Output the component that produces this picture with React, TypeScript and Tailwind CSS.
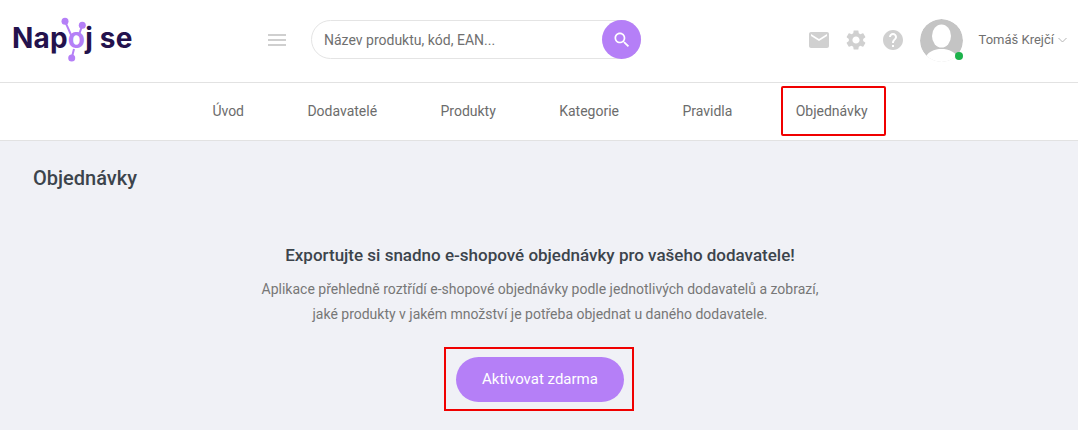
import React from "react";

const P = "#b57ff7";

function Logo() {
  return (
    <div className="relative self-start mt-[15px] ml-[-1px] w-[126px] h-[50px] shrink-0 font-['Inter',sans-serif] font-bold text-[28px] leading-[50px] tracking-[0.2px] text-[#24124d] whitespace-nowrap">
      <span className="relative top-[-2px]">
        Nap<span className="text-[#b57ff7]">o</span>j se
      </span>
      <svg className="absolute left-[1px] top-0" width="125" height="50" viewBox="0 0 125 50">
        <g stroke={P} strokeWidth="2" fill="none">
          <path d="M52 6.300 L59 22" />
          <path d="M69.300 10.300 L65.500 21" />
          <path d="M58.700 43 L61 34" />
        </g>
        <circle cx="52" cy="6.300" r="3.500" fill={P} />
        <circle cx="69.300" cy="10.300" r="3.500" fill={P} />
        <circle cx="58.700" cy="43" r="3.500" fill={P} />
      </svg>
    </div>
  );
}

function Ic({ d, size = 24, color = "#d0d0d0" }: { d: string; size?: number; color?: string }) {
  return (
    <svg width={size} height={size} viewBox="0 0 24 24" fill={color}>
      <path d={d} />
    </svg>
  );
}

const MAIL = "M20 4H4c-1.1 0-1.99.9-1.99 2L2 18c0 1.1.9 2 2 2h16c1.1 0 2-.9 2-2V6c0-1.1-.9-2-2-2zm0 4l-8 5-8-5V6l8 5 8-5v2z";
const GEAR = "M19.14 12.94c.04-.3.06-.61.06-.94 0-.32-.02-.64-.07-.94l2.03-1.58c.18-.14.23-.41.12-.61l-1.92-3.32c-.12-.22-.37-.29-.59-.22l-2.39.96c-.5-.38-1.03-.7-1.62-.94l-.36-2.54c-.04-.24-.24-.41-.48-.41h-3.84c-.24 0-.43.17-.47.41l-.36 2.54c-.59.24-1.13.57-1.62.94l-2.39-.96c-.22-.08-.47 0-.59.22L2.74 8.87c-.12.21-.08.47.12.61l2.03 1.58c-.05.3-.09.63-.09.94s.02.64.07.94l-2.03 1.58c-.18.14-.23.41-.12.61l1.92 3.32c.12.22.37.29.59.22l2.39-.96c.5.38 1.03.7 1.62.94l.36 2.54c.05.24.24.41.48.41h3.84c.24 0 .44-.17.47-.41l.36-2.54c.59-.24 1.13-.56 1.62-.94l2.39.96c.22.08.47 0 .59-.22l1.92-3.32c.12-.22.07-.47-.12-.61l-2.01-1.58zM12 15.6c-1.98 0-3.6-1.62-3.6-3.6s1.62-3.6 3.6-3.6 3.6 1.62 3.6 3.6-1.62 3.6-3.6 3.6z";
const HELP = "M12 2C6.48 2 2 6.48 2 12s4.48 10 10 10 10-4.48 10-10S17.52 2 12 2zm1 17h-2v-2h2v2zm2.07-7.75l-.9.92C13.45 12.9 13 13.5 13 15h-2v-.5c0-1.1.45-2.1 1.17-2.83l1.24-1.26c.37-.36.59-.86.59-1.41 0-1.1-.9-2-2-2s-2 .9-2 2H8c0-2.21 1.79-4 4-4s4 1.79 4 4c0 .88-.36 1.68-.93 2.25z";
const SEARCH = "M15.5 14h-.79l-.28-.27C15.41 12.59 16 11.11 16 9.5 16 5.91 13.09 3 9.5 3S3 5.91 3 9.5 5.91 16 9.5 16c1.61 0 3.09-.59 4.23-1.57l.27.28v.79l5 4.99L20.49 19l-4.99-5zm-6 0C7.01 14 5 11.99 5 9.5S7.01 5 9.5 5 14 7.01 14 9.5 11.99 14 9.5 14z";

function Avatar() {
  return (
    <div className="relative w-[43px] h-[43px] shrink-0 mt-[1px]">
      <svg width="43" height="43" viewBox="0 0 43 43" className="rounded-full">
        <circle cx="21.500" cy="21.500" r="21.500" fill="#c4c4c4" />
        <ellipse cx="21.500" cy="17" rx="9.500" ry="11.500" fill="#fff" />
        <path d="M4 43 C6 32 15 30 21.500 30 C28 30 37 32 39 43 Z" fill="#fff" />
      </svg>
      <span className="absolute right-0 bottom-[2px] w-2 h-2 rounded-full bg-[#1cb24b]" />
    </div>
  );
}

export default function App() {
  const nav = ["Úvod", "Dodavatelé", "Produkty", "Kategorie", "Pravidla"];
  return (
    <div className="h-[430px] w-[1078px] overflow-hidden bg-[#f0f1f6] font-['Roboto',sans-serif]">
      <header className="h-[83px] bg-white border-b border-[#e2e2e2] flex items-center pl-[13px] pr-[11px] pb-[3px]">
        <Logo />
        <div className="ml-[130px] flex flex-col gap-[3px] w-[18px] shrink-0">
          <span className="h-[2px] bg-[#cfcfcf]" />
          <span className="h-[2px] bg-[#cfcfcf]" />
          <span className="h-[2px] bg-[#cfcfcf]" />
        </div>
        <div className="ml-[25px] w-[330px] h-[39px] rounded-full border border-[#e4e4e4] flex items-center relative pl-3 text-sm text-[#6f6f6f]">
          Název produktu, kód, EAN...
          <div className="absolute right-[-1px] top-[-1px] w-[39px] h-[39px] rounded-full bg-[#b57ff7] flex items-center justify-center">
            <Ic d={SEARCH} size={20} color="#fff" />
          </div>
        </div>
        <div className="ml-auto flex items-center">
          <Ic d={MAIL} />
          <span className="ml-[13px]"><Ic d={GEAR} /></span>
          <span className="ml-[13px]"><Ic d={HELP} /></span>
          <span className="ml-[15px]"><Avatar /></span>
          <span className="ml-4 text-[13px] text-[#707070]">Tomáš Krejčí</span>
          <svg className="ml-[4px]" width="9" height="6" viewBox="0 0 9 6" fill="none" stroke="#b5b5b5" strokeWidth="1">
            <path d="M0.500 1 L4.500 5 L8.500 1" />
          </svg>
        </div>
      </header>
      <nav className="h-[58px] bg-white border-b border-[#e2e2e2] flex items-center justify-center text-sm text-[#6c6c6c] pl-[2px] pb-[1px]">
        {nav.map((n) => <span key={n} className="px-[31.7px]">{n}</span>)}
        <span className="px-[31.7px] relative">
          Objednávky
          <span className="absolute left-[17.2px] top-[-15.500px] w-[105px] h-[50px] border-2 border-[#f00000] rounded-[2px]" />
        </span>
      </nav>
      <main className="px-[33px] pt-[25px] pl-[35px]">
        <h1 className="text-xl leading-[25px] font-medium text-[#3c444c] ml-[-2px]">Objednávky</h1>
        <div className="mt-[52px] flex flex-col items-center">
          <h2 className="text-[17px] leading-6 font-medium text-[#3c444c]">Exportujte si snadno e-shopové objednávky pro vašeho dodavatele!</h2>
          <p className="mt-[10px] text-sm leading-[25px] text-[#777777] text-center">
            Aplikace přehledně roztřídí e-shopové objednávky podle jednotlivých dodavatelů a zobrazí,
            <br />
            jaké produkty v jakém množství je potřeba objednat u daného dodavatele.
          </p>
          <div className="mt-[20px] mr-[2px] w-[190px] h-[64px] border-2 border-[#f00000] flex items-center justify-center">
            <button className="ml-[2px] w-[168px] h-[45px] rounded-full bg-[#b57ff7] text-white text-[15px]">Aktivovat zdarma</button>
          </div>
        </div>
      </main>
    </div>
  );
}
